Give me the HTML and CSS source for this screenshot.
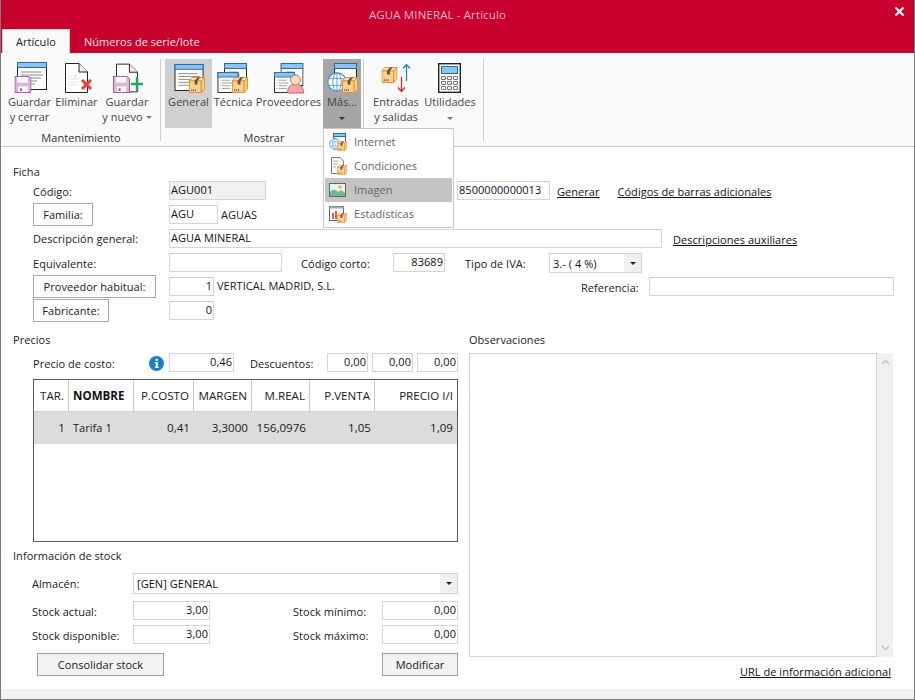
FILE: index.html
```html
<!DOCTYPE html>
<html lang="es">
<head>
<meta charset="utf-8">
<title>AGUA MINERAL - Artículo</title>
<link rel="stylesheet" href="styles.css">
</head>
<body>
<svg class="defs" width="0" height="0" aria-hidden="true">
  <defs>
    <symbol id="floppy" viewBox="0 0 18 18">
      <path d="M.5 .5H15L17.5 3V17.5H.5Z" fill="#dcb7dc" stroke="#9b4f9b"/>
      <rect x="3" y="1" width="11" height="6" fill="#fff"/>
      <rect x="4" y="11" width="10" height="6" fill="#fff"/>
      <rect x="6" y="13" width="2" height="3" fill="#9b4f9b"/>
    </symbol>
    <symbol id="box" viewBox="0 0 17 17">
      <path d="M.5 4H13V16.500H.5Z" fill="#fbd28c" stroke="#ee8a22"/>
      <path d="M.5 4L3.500 .5H16.500L13 4Z" fill="#fde3b4" stroke="#ee8a22"/>
      <path d="M13 4L16.500 .5V13L13 16.500Z" fill="#fbd28c" stroke="#ee8a22"/>
      <path d="M6 4L9 .5H12L9 4V8H6Z" fill="#555"/>
      <path d="M3 13v2M5 13v2M7 13v2" stroke="#555"/>
    </symbol>
    <symbol id="win" viewBox="0 0 30 28">
      <rect x=".5" y=".5" width="29" height="27" fill="#fff" stroke="#222"/>
      <rect x=".5" y=".5" width="29" height="5" fill="#8cc4ee" stroke="#1f6fb0"/>
      <path d="M4 10H24M4 13H26M4 16H24M4 19H20M4 22H18" stroke="#888"/>
    </symbol>
    <symbol id="win2" viewBox="0 0 23 23">
      <rect x=".5" y=".5" width="22" height="22" fill="#fff" stroke="#222"/>
      <rect x=".5" y=".5" width="22" height="5" fill="#8cc4ee" stroke="#1f6fb0"/>
      <path d="M5 9H14M5 12H16M5 15H14M5 18H14" stroke="#999"/>
      <path d="M2.500 9h1M2.500 12h1M2.500 15h1M2.500 18h1" stroke="#ee9a22"/>
    </symbol>
    <symbol id="doc" viewBox="0 0 23 30">
      <path d="M.5 .5H14L22.500 9V29.500H.5Z" fill="#fff" stroke="#222"/>
      <path d="M14 .5V9H22.500" fill="#eee" stroke="#222"/>
      <path d="M3 13H13M3 16H13M3 19H13M3 22H11" stroke="#e4e4e4"/>
    </symbol>
    <symbol id="globe" viewBox="0 0 24 24">
      <circle cx="12" cy="12" r="11" fill="#fff" stroke="#4a90c8" stroke-width="1.400"/>
      <ellipse cx="12" cy="12" rx="5" ry="11" fill="none" stroke="#4a90c8"/>
      <path d="M12 1V23M1.500 8H22.500M1.500 16H22.500" stroke="#4a90c8" fill="none"/>
    </symbol>
  </defs>
</svg>
<main class="window">
  <header class="titlebar">
    <h1 class="title">AGUA MINERAL - Artículo</h1>
    <svg class="close" width="11" height="11" viewBox="0 0 11 11"><path d="M1.500 1.500L9.500 9.500M9.500 1.500L1.500 9.500" stroke="#eee" stroke-width="2.400"/></svg>
  </header>
  <nav class="tabs">
    <span class="tab active">Artículo</span>
    <span class="tab">Números de serie/lote</span>
  </nav>
  <section class="ribbon">
    <div class="group group-mant">
      <div class="group-buttons">
        <div class="rb rb-gc">
          <svg class="ico" width="34" height="34" viewBox="0 0 34 34"><use href="#win" x="4" y="-1" width="30" height="28"/><use href="#floppy" x="1.500" y="13" width="17" height="17"/></svg>
          <span class="rb-text">Guardar<br>y cerrar</span>
        </div>
        <div class="rb rb-el">
          <svg class="ico" width="34" height="34" viewBox="0 0 34 34"><use href="#doc" x="5" y="0" width="23" height="30"/><path d="M22 17L31 26M31 17L22 26" stroke="#ee3b3b" stroke-width="3"/></svg>
          <span class="rb-text">Eliminar</span>
        </div>
        <div class="rb rb-gn">
          <svg class="ico" width="34" height="34" viewBox="0 0 34 34"><use href="#doc" x="6" y="0" width="22" height="30"/><use href="#floppy" x="3" y="13" width="17" height="17"/><path d="M27 14V28M21 21H33" stroke="#1aa850" stroke-width="2.500"/></svg>
          <span class="rb-text">Guardar<br>y nuevo <i class="caret"></i></span>
        </div>
      </div>
      <div class="group-label">Mantenimiento</div>
    </div>
    <div class="group group-most">
      <div class="group-buttons">
        <div class="rb rb-ge on">
          <svg class="ico" width="34" height="34" viewBox="0 0 34 34"><use href="#win" x="2" y="1" width="30" height="27"/><use href="#box" x="17" y="14" width="16" height="16"/></svg>
          <span class="rb-text">General</span>
        </div>
        <div class="rb rb-te">
          <svg class="ico" width="34" height="34" viewBox="0 0 34 34"><use href="#win2" x="8" y="0" width="23" height="23"/><use href="#win2" x="1" y="9" width="22" height="21"/><use href="#box" x="16" y="14" width="16" height="16"/></svg>
          <span class="rb-text">Técnica</span>
        </div>
        <div class="rb rb-pr">
          <svg class="ico" width="34" height="34" viewBox="0 0 34 34"><use href="#win2" x="8.500" y="0" width="23" height="23"/><use href="#win2" x="1.500" y="9" width="22" height="21"/><path d="M15.500 30C15.500 24 19 21 23.500 21S31.500 24 31.500 30Z" fill="#f4a8a8" stroke="#d65c5c"/><circle cx="23.500" cy="17" r="5" fill="#fcdcc0" stroke="#b58a68"/></svg>
          <span class="rb-text">Proveedores</span>
        </div>
        <div class="rb rb-ma open">
          <svg class="ico" width="34" height="34" viewBox="0 0 34 34"><rect x="9.500" y=".5" width="22" height="22" fill="#fff" stroke="#222"/><rect x="9.500" y=".5" width="22" height="5" fill="#8cc4ee" stroke="#1f6fb0"/><use href="#globe" x="2" y="9" width="20" height="20"/><use href="#box" x="17" y="14" width="16" height="16"/></svg>
          <span class="rb-text">Más...</span>
          <i class="caret caret-below dark"></i>
        </div>
      </div>
      <div class="group-label">Mostrar</div>
    </div>
    <div class="group group-util">
      <div class="group-buttons">
        <div class="rb rb-en">
          <svg class="ico" width="34" height="34" viewBox="0 0 34 34"><use href="#box" x="2.500" y="4" width="16" height="16"/><path d="M27.500 2V18M24 5.500L27.500 1.500L31 5.500" stroke="#2484c6" stroke-width="1.300" fill="none"/><path d="M22.500 14V28M19 24.500L22.500 28.500L26 24.500" stroke="#e0252b" stroke-width="1.300" fill="none"/></svg>
          <span class="rb-text">Entradas<br>y salidas</span>
        </div>
        <div class="rb rb-ut">
          <svg class="ico" width="34" height="34" viewBox="0 0 34 34"><rect x="5.700" y=".7" width="21.600" height="28.600" fill="#fff" stroke="#222" stroke-width="1.400"/><rect x="8.500" y="3.500" width="16" height="7" fill="#8cc4ee" stroke="#1f6fb0"/><path d="M8.500 13.500h4v3h-4zM14.500 13.500h4v3h-4zM20.500 13.500h4v3h-4zM8.500 18.500h4v3h-4zM14.500 18.500h4v3h-4zM20.500 18.500h4v3h-4zM8.500 23.500h4v3h-4zM14.500 23.500h4v3h-4zM20.500 23.500h4v3h-4z" fill="#fff" stroke="#777"/></svg>
          <span class="rb-text">Utilidades</span>
          <i class="caret caret-below"></i>
        </div>
      </div>
    </div>
  </section>

  <div class="menu">
    <div class="menu-item">
      <svg width="18" height="18" viewBox="0 0 18 18"><rect x="4.500" y=".5" width="12" height="12" fill="#fff" stroke="#557"/><rect x="4.500" y=".5" width="12" height="3" fill="#8cc4ee" stroke="#1f6fb0"/><use href="#globe" x="0" y="5" width="12" height="12"/><use href="#box" x="8" y="8" width="10" height="10"/></svg>
      <span>Internet</span>
    </div>
    <div class="menu-item">
      <svg width="18" height="18" viewBox="0 0 18 18"><path d="M2.500 .5H11L14.500 4V16.500H2.500Z" fill="#fff" stroke="#777"/><path d="M4 4H9M4 7H9M4 10H7" stroke="#9ab"/><use href="#box" x="8" y="8" width="10" height="10"/></svg>
      <span>Condiciones</span>
    </div>
    <div class="menu-item selected">
      <svg width="18" height="18" viewBox="0 0 18 18"><rect x=".5" y="2.500" width="16" height="13" fill="#e8f2e8" stroke="#666"/><path d="M1 15V11C4 8 6 8 9 11C11 9 13 9 16 12V15Z" fill="#6cbf8a"/><circle cx="11" cy="6" r="1.500" fill="#ee9a55"/></svg>
      <span>Imagen</span>
    </div>
    <div class="menu-item">
      <svg width="18" height="18" viewBox="0 0 18 18"><rect x=".5" y="1.500" width="14" height="14" fill="#fff" stroke="#666"/><rect x=".5" y="1.500" width="14" height="2" fill="#aaa"/><path d="M3 14V8h2v6zM6 14V6h2v8z" fill="#e8604c"/><path d="M9 14v-3h2v3z" fill="#f0a030"/><use href="#box" x="8" y="8" width="10" height="10"/></svg>
      <span>Estadísticas</span>
    </div>
  </div>

  <div class="content">
    <section class="ficha">
      <h2 class="sec">Ficha</h2>
      <div class="row row-1">
        <label class="lbl">Código:</label>
        <span class="in in-ro w-codigo">AGU001</span>
        <span class="in w-barcode">8500000000013</span>
        <a class="link link-gen">Generar</a>
        <a class="link link-cod">Códigos de barras adicionales</a>
      </div>
      <div class="row">
        <span class="btn btn-fam">Familia:</span>
        <span class="in w-fam">AGU</span>
        <span class="txt">AGUAS</span>
      </div>
      <div class="row">
        <label class="lbl">Descripción general:</label>
        <span class="in w-desc">AGUA MINERAL</span>
        <a class="link link-desc">Descripciones auxiliares</a>
      </div>
      <div class="row">
        <label class="lbl lbl-equiv">Equivalente:</label>
        <span class="in w-equiv"></span>
        <label class="lbl2 lbl-corto">Código corto:</label>
        <span class="in num w-corto">83689</span>
        <label class="lbl2 lbl-iva">Tipo de IVA:</label>
        <span class="in sel w-iva">3.- ( 4 %)<b class="sel-btn"><i class="arrow"></i></b></span>
      </div>
      <div class="row">
        <span class="btn btn-prov">Proveedor habitual:</span>
        <span class="in num w-num">1</span>
        <span class="txt txt-prov">VERTICAL MADRID, S.L.</span>
        <label class="lbl2 lbl-ref">Referencia:</label>
        <span class="in w-ref"></span>
      </div>
      <div class="row">
        <span class="btn btn-fab">Fabricante:</span>
        <span class="in num w-num">0</span>
      </div>
    </section>

    <div class="lower">
      <div class="left">
        <h2 class="sec">Precios</h2>
        <div class="cost-row">
          <label class="lbl2 lbl-cost">Precio de costo:</label>
          <svg class="info" width="15" height="15" viewBox="0 0 16 16"><circle cx="8" cy="8" r="8" fill="#1b7fc4"/><rect x="7" y="3" width="2.400" height="2.200" fill="#fff"/><path d="M6.200 6.500H9.400V11.500H10.400V12.800H6.200V11.500H7.200V7.800H6.200Z" fill="#fff"/></svg>
          <span class="in num w-cost">0,46</span>
          <label class="lbl2 lbl-dto">Descuentos:</label>
          <span class="in num w-dto">0,00</span>
          <span class="in num w-dto">0,00</span>
          <span class="in num w-dto">0,00</span>
        </div>
        <div class="grid">
          <div class="gr gr-head">
            <span class="c c1 r">TAR.</span>
            <span class="c c2 b">NOMBRE</span>
            <span class="c c3 r">P.COSTO</span>
            <span class="c c4 r">MARGEN</span>
            <span class="c c5 r">M.REAL</span>
            <span class="c c6 r">P.VENTA</span>
            <span class="c c7 r">PRECIO I/I</span>
          </div>
          <div class="gr gr-sel">
            <span class="c c1 r">1</span>
            <span class="c c2 c-name">Tarifa 1</span>
            <span class="c c3 r">0,41</span>
            <span class="c c4 r">3,3000</span>
            <span class="c c5 r">156,0976</span>
            <span class="c c6 r">1,05</span>
            <span class="c c7 r">1,09</span>
          </div>
        </div>
        <h2 class="sec sec-stock">Información de stock</h2>
        <div class="st-row st-alm">
          <label class="st-lbl">Almacén:</label>
          <span class="in sel w-alm">[GEN] GENERAL<b class="sel-btn"><i class="arrow"></i></b></span>
        </div>
        <div class="st-row">
          <label class="st-lbl">Stock actual:</label>
          <span class="in num w-st">3,00</span>
          <label class="st-lbl2">Stock mínimo:</label>
          <span class="in num w-st2">0,00</span>
        </div>
        <div class="st-row">
          <label class="st-lbl">Stock disponible:</label>
          <span class="in num w-st">3,00</span>
          <label class="st-lbl2">Stock máximo:</label>
          <span class="in num w-st2">0,00</span>
        </div>
        <div class="st-actions">
          <span class="btn btn-gray btn-con">Consolidar stock</span>
          <span class="btn btn-gray btn-mod">Modificar</span>
        </div>
      </div>
      <div class="right">
        <h2 class="sec">Observaciones</h2>
        <div class="obs">
          <div class="obs-text"></div>
          <div class="scroll">
            <svg width="9" height="6" viewBox="0 0 9 6"><path d="M1 5L4.500 1.500L8 5" fill="none" stroke="#c4c4c4" stroke-width="1.500"/></svg>
            <svg width="9" height="6" viewBox="0 0 9 6"><path d="M1 1L4.500 4.500L8 1" fill="none" stroke="#c4c4c4" stroke-width="1.500"/></svg>
          </div>
        </div>
        <div class="url-row"><a class="link">URL de información adicional</a></div>
      </div>
    </div>
  </div>
  <div class="strip"></div>
</main>
</body>
</html>
```

FILE: styles.css
```css
* { box-sizing: border-box; }
html, body { margin: 0; padding: 0; }
body {
  font-family: "Open Sans", "Noto Sans", sans-serif;
  font-size: 11px;
  letter-spacing: .04px;
  color: #1a1a1a;
  background: #fff;
  overflow: hidden;
}
.defs { position: absolute; }
.window {
  position: relative;
  width: 915px;
  height: 700px;
  border: 1px solid #7a7a7a;
  border-top: 0;
  display: flex;
  flex-direction: column;
  overflow: hidden;
}
.titlebar {
  height: 29px;
  flex: none;
  background: #c8002d;
  position: relative;
  display: flex;
  align-items: center;
  justify-content: center;
}
.title { margin: 0; font-size: 11.5px; letter-spacing: .12px; font-weight: 400; color: #e9b9c4; padding-right: 40px; }
.close { position: absolute; right: 9px; top: 6px; }
.tabs {
  height: 24px;
  flex: none;
  background: #c8002d;
  display: flex;
  padding-left: 1px;
}
.tab { color: #fbe6ea; padding: 0 14px; line-height: 26px; }
.tab.active {
  width: 68px;
  padding: 0 13px;
  background: #fafafa;
  color: #222;
  border: 1px solid #ccc;
  border-bottom: 0;
  line-height: 24px;
}
.ribbon {
  height: 94px;
  flex: none;
  background: #fafafa;
  border-bottom: 1px solid #c8c8c8;
  display: flex;
  padding-top: 6px;
  color: #444;
}
.group {
  display: flex;
  flex-direction: column;
  border-right: 1px solid #d0d0d0;
  height: 82px;
}
.group-mant { width: 160px; padding-left: 5px; }
.group-most { width: 203px; padding-left: 4px; }
.group-util { width: 120px; padding-left: 5px; }
.group-buttons { display: flex; height: 69px; }
.group-label { text-align: center; line-height: 18px; margin-top: 1px; color: #333; }
.group-mant .group-label { padding-right: 4px; }
.rb { display: flex; flex-direction: column; align-items: center; height: 69px; padding-top: 4px; }
.rb .ico { flex: none; overflow: visible; }
.rb-text { text-align: center; line-height: 15px; margin-top: -3px; white-space: nowrap; }
.rb.on { background: #d0d0d0; }
.rb.open { background: #a6a6a6; }
.rb-gc { width: 47px; }
.rb-el { width: 47px; }
.rb-gn { width: 54px; }
.rb-ge { width: 47px; }
.rb-te { width: 42px; }
.rb-pr { width: 69px; }
.rb-ma { width: 38px; }
.rb-en { width: 54px; }
.rb-ut { width: 54px; }
.caret {
  display: inline-block;
  width: 0; height: 0;
  border: 3px solid transparent;
  border-top: 3px solid #777;
  border-bottom: 0;
  vertical-align: 2px;
}
.caret-below { margin-top: 8px; }
.caret.dark { border-top-color: #333; }

.menu {
  position: absolute;
  left: 322px;
  top: 128px;
  width: 131px;
  height: 100px;
  background: #fff;
  border: 1px solid #c8c8c8;
  padding: 1px;
  z-index: 5;
  color: #666;
}
.menu-item { height: 24px; display: flex; align-items: center; padding-left: 4px; gap: 7px; }
.menu-item span { padding-bottom: 2px; }
.menu-item.selected { background: #c4c4c4; }

.content { flex: 1; background: #fff; min-height: 0; }
.strip { height: 10px; flex: none; background: #f2f2f2; }
.sec { margin: 0; font-size: inherit; font-weight: 400; color: #222; line-height: 16px; }
.ficha { padding: 17px 0 0 12px; height: 185px; }
.ficha .sec { margin-bottom: 1px; }
.row { display: flex; align-items: flex-start; height: 24px; padding-left: 20px; }
.row-1 { height: 22px; }
.row .in { margin-top: 2px; }
.row-1 .in { margin-top: 0; }
.lbl { width: 136px; flex: none; line-height: 24px; }
.row-1 .lbl { line-height: 22px; }
.lbl-equiv { line-height: 25px; }
.lbl2, .st-lbl, .st-lbl2 { flex: none; line-height: 26px; }
.in {
  display: block;
  height: 19px;
  flex: none;
  border: 1px solid #d4d4d4;
  background: #fff;
  padding: 0 1px;
  line-height: 15px;
  color: #111;
  white-space: nowrap;
}
.in-ro { background: #f0f0f0; }
.num { text-align: right; }
.sel { position: relative; padding-top: 2px; padding-left: 3px; }
.row .sel { height: 20px; }
.sel-btn { position: absolute; right: 0; top: 0; bottom: 0; width: 17px; background: #f0f0f0; display: flex; align-items: center; justify-content: center; }
.arrow { width: 0; height: 0; border: 3px solid transparent; border-top: 3px solid #222; border-bottom: 0; }
.txt { margin-left: 3px; line-height: 23px; }
.txt-prov { line-height: 22px; }
.link { color: #111; text-decoration: underline; white-space: nowrap; line-height: 22px; }
.link-desc { line-height: 26px; margin-left: 11px; }
.btn {
  display: flex;
  align-items: center;
  justify-content: center;
  height: 23px;
  flex: none;
  border: 1px solid #a8a8a8;
  background: #fff;
}
.btn-fam { width: 60px; margin-right: 76px; }
.btn-prov { width: 123px; margin-right: 13px; }
.btn-fab { width: 76px; margin-right: 60px; }
.w-codigo { width: 97px; }
.w-barcode { width: 93px; margin-left: 191px; padding-left: 1px; }
.link-gen { margin-left: 7px; }
.link-cod { margin-left: 18px; }
.w-fam { width: 49px; }
.w-desc { width: 493px; }
.w-equiv { width: 113px; }
.lbl-corto { margin-left: 19px; width: 92px; }
.w-corto { width: 52px; }
.lbl-iva { margin-left: 20px; width: 84px; }
.w-iva { width: 93px; }
.w-num { width: 45px; }
.lbl-ref { margin-left: auto; width: 68px; }
.w-ref { width: 245px; margin-right: 20px; }

.lower { display: flex; padding-left: 12px; }
.left { width: 445px; flex: none; }
.cost-row { display: flex; align-items: flex-start; margin-top: 5px; height: 19px; padding-left: 20px; }
.cost-row .lbl2 { line-height: 22px; }
.lbl-cost { width: 116px; }
.info { flex: none; margin: 3px 5px 0 0; }
.w-cost { width: 65px; }
.lbl-dto { margin-left: 16px; width: 77px; }
.w-dto { width: 41px; margin-right: 4px; }
.w-dto:last-child { margin-right: 0; }
.grid { margin: 7px 0 0 20px; width: 425px; height: 163px; border: 1px solid #5a5a5a; background: #fff; }
.gr { display: flex; font-size: 11.6px; letter-spacing: 0; }
.gr-head { height: 32px; line-height: 31px; border-bottom: 1px solid #d0d0d0; }
.gr-head .c { border-right: 1px solid #c8c8c8; }
.gr-sel { height: 32px; line-height: 32px; background: #dcdcdc; }
.c { display: block; padding: 0 4px; flex: none; white-space: nowrap; }
.r { text-align: right; }
.b { font-weight: 700; color: #111; }
.c-name { font-size: 11px; letter-spacing: .04px; }
.c1 { width: 35px; }
.c2 { width: 65px; }
.c3 { width: 60px; }
.c4 { width: 58px; }
.c5 { width: 58px; }
.c6 { width: 65px; }
.c7 { width: 82px; border-right: 0 !important; }
.sec-stock { margin-top: 6px; }
.st-row { display: flex; align-items: flex-start; height: 24px; padding-left: 19px; }
.st-row .st-lbl, .st-row .st-lbl2 { line-height: 22px; }
.st-alm { margin-top: 9px; height: 21px; margin-bottom: 7px; }
.st-lbl { width: 101px; }
.st-lbl2 { width: 89px; }
.w-alm { width: 325px; }
.st-row .w-alm { height: 21px; }
.w-st { width: 77px; margin-right: 83px; }
.w-st2 { width: 76px; }
.st-actions { display: flex; justify-content: space-between; margin-top: 4px; padding-left: 24px; }
.btn-gray { background: #f2f2f2; border-color: #a0a0a0; }
.btn-con { width: 127px; }
.btn-mod { width: 76px; }

.right { width: 424px; margin-left: 11px; flex: none; }
.obs { display: flex; margin-top: 5px; height: 304px; }
.obs-text { width: 408px; border: 1px solid #d4d4d4; flex: none; }
.scroll { width: 16px; flex: none; background: #f0f0f0; display: flex; flex-direction: column; align-items: center; justify-content: space-between; padding: 6px 0; }
.url-row { text-align: right; margin-top: 4px; padding-right: 2px; }
```
